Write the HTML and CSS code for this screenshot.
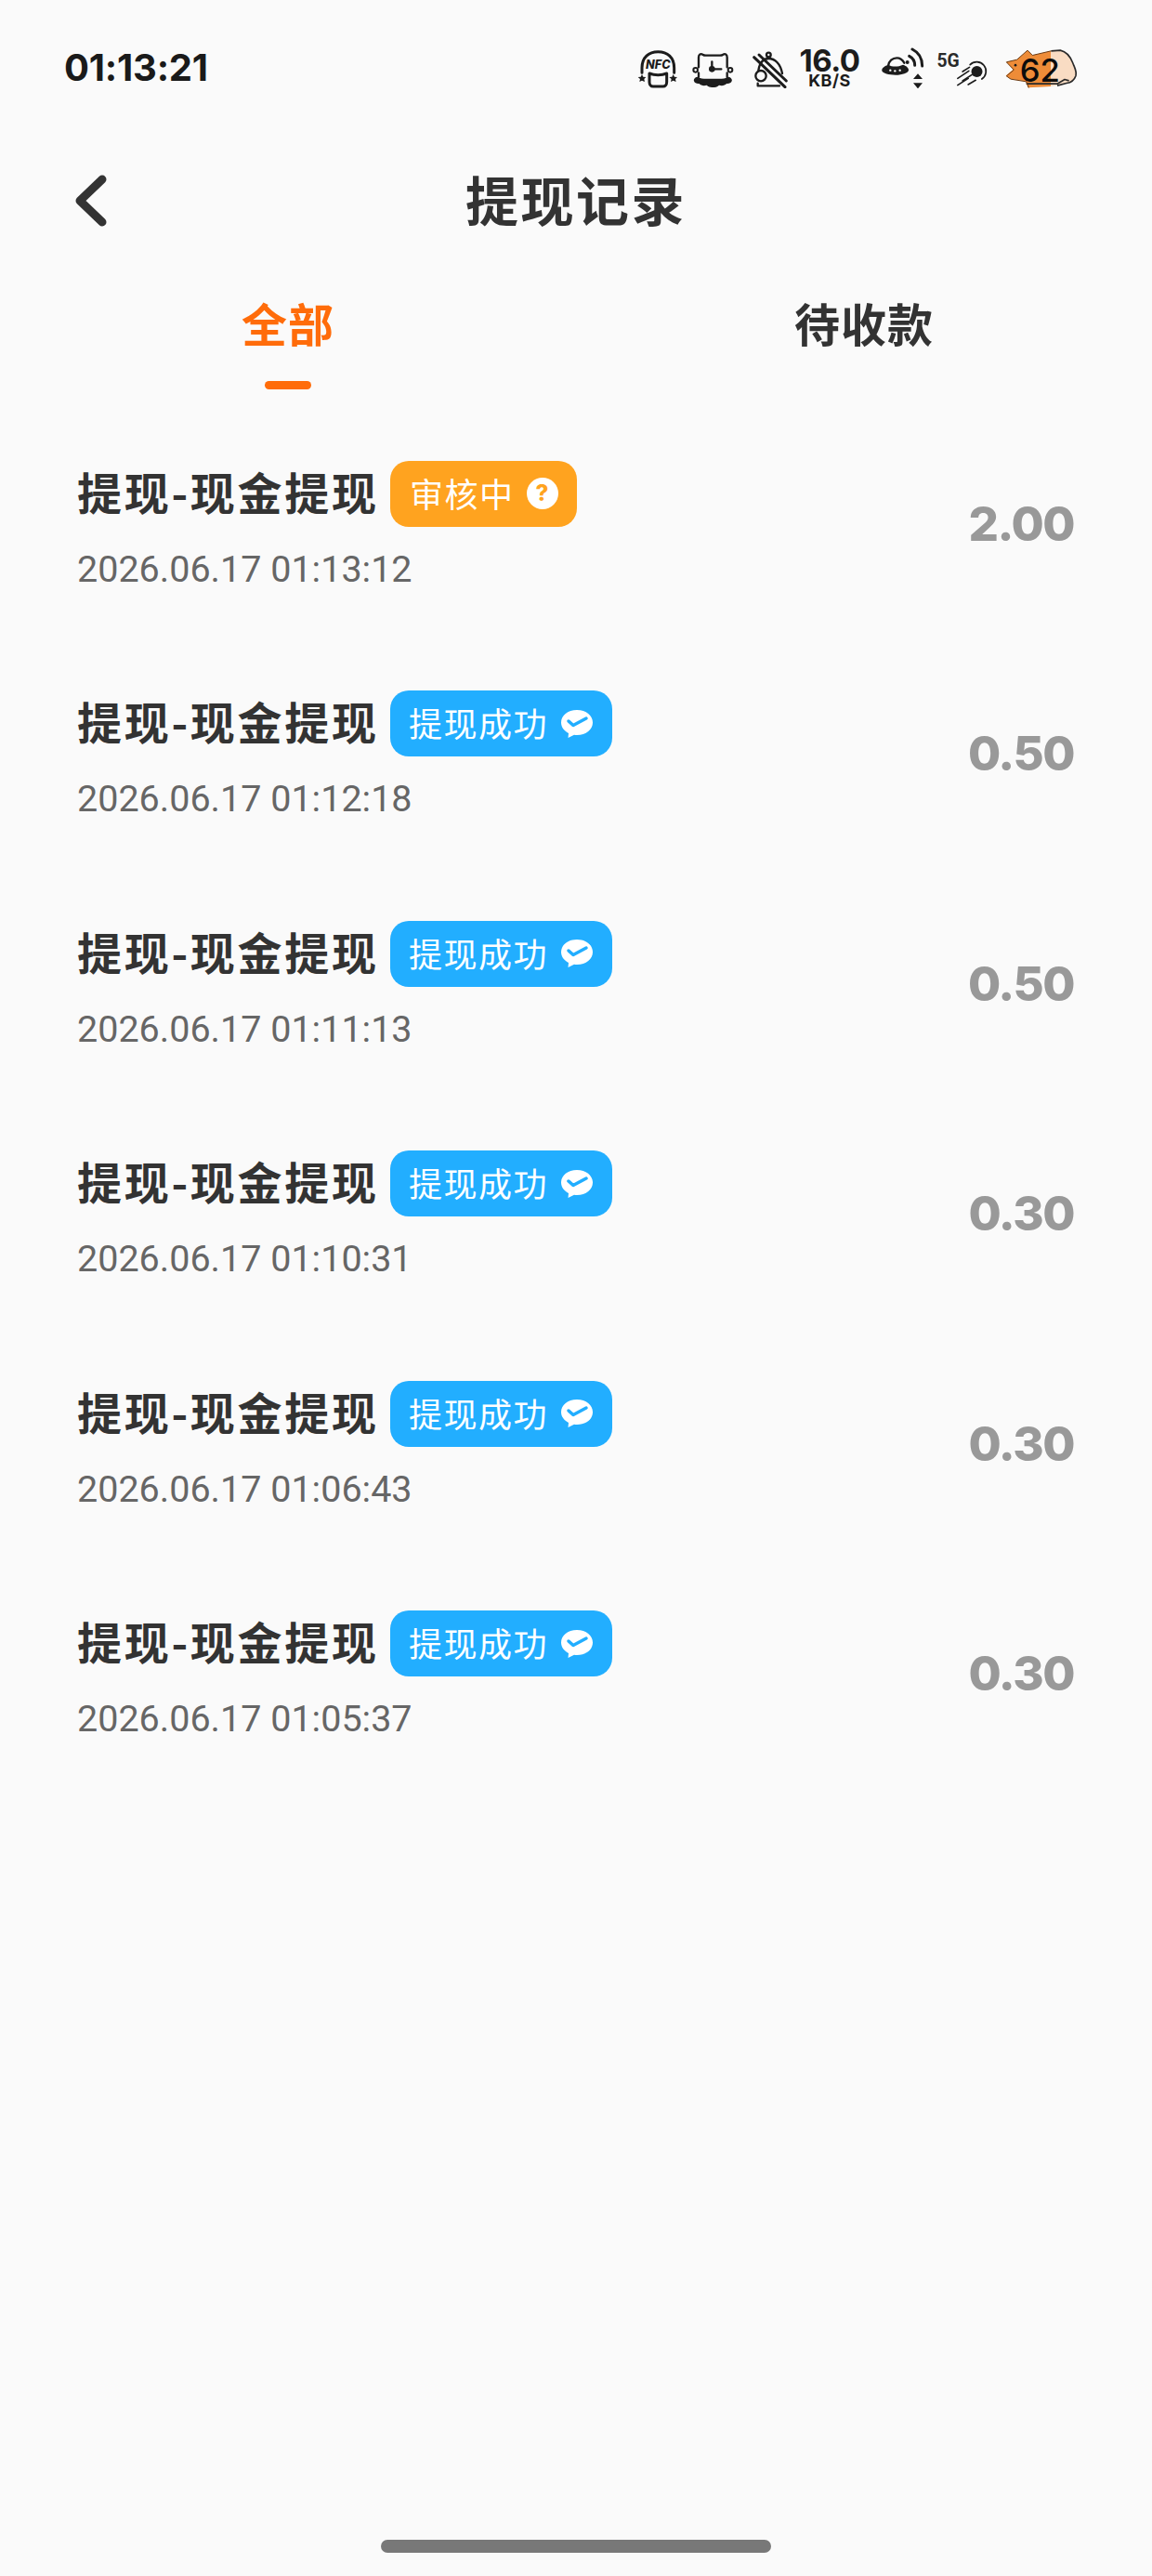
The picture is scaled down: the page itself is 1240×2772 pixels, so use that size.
FILE: index.html
```html
<!DOCTYPE html>
<html lang="zh-CN">
<head>
<meta charset="utf-8">
<title>提现记录</title>
<link rel="stylesheet" href="styles.css">
</head>
<body>
<div class="page">
  <header class="status">
    <span class="time">01:13:21</span>
    <div class="status-icons">
      <svg class="si si-nfc" viewBox="18 30 144 132">
        <path class="ln" d="M36 112V96C36 62 58 44 88 44s52 18 52 52v16"/>
        <text class="nfc" x="88" y="100" text-anchor="middle">NFC</text>
        <path class="ln" d="M60 114c10 4 18 5 28 5s18-1 28-5v28c0 8-5 14-12 14H72c-7 0-12-6-12-14z"/>
        <path class="fl" d="M36 117l4 8 9 1-6 6 2 9-9-4-8 4 2-9-7-6 9-1zM137 117l4 8 9 1-6 6 2 9-9-4-8 4 2-9-7-6 9-1z"/>
      </svg>
      <svg class="si si-clock" viewBox="198 30 144 132">
        <path class="ln-mid" d="M219 94V62c0-9 7-13 13-9 3 2 6 3 10 3h46c4 0 7-1 10-3 6-4 13 0 13 9v32"/>
        <path class="ln-mid" d="M219 112v14M311 112v14"/>
        <circle class="ring" cx="209" cy="103" r="7"/>
        <circle class="ring" cx="321" cy="103" r="7"/>
        <path class="fl" d="M214 125c10 5 20 6 30 6h42c10 0 20-1 30-6 8 2 12 8 10 14-2 7-10 9-17 8-5 6-15 8-24 5-6 6-14 7-20 7s-14-1-20-7c-9 3-19 1-24-5-7 1-15-1-17-8-2-6 2-12 10-14z"/>
        <path class="ln-mid" d="M262 76v24h30"/>
        <circle class="fl" cx="262" cy="100" r="10"/>
      </svg>
      <svg class="si si-bell" viewBox="384 30 132 132">
        <circle class="ln-mid" cx="445" cy="54" r="7"/>
        <path class="ln-mid" d="M412 104c4-24 16-38 33-38 20 0 38 16 44 48"/>
        <circle class="ln-mid" cx="420" cy="122" r="17"/>
        <path class="ln-mid" d="M410 146v8h70"/>
        <path class="st" d="M398 62l100 96"/>
        <path class="st" d="M414 54l88 84"/>
      </svg>
      <div class="speed"><span class="speed-num">16.0</span><span class="speed-unit">KB/S</span></div>
      <svg class="si si-ufo" viewBox="295 30 150 132">
        <path class="ln-mid" d="M322 90c2-16 14-26 28-26 10 0 18 5 24 16"/>
        <path class="fl" d="M322 86c-14 5-22 12-20 20 3 8 22 13 44 13s40-7 42-15c1-7-6-14-18-18-16 7-34 8-48 0z"/>
        <circle class="hole" cx="329" cy="104" r="3.500"/><circle class="hole" cx="344" cy="106" r="3.500"/><circle class="hole" cx="360" cy="104" r="3.500"/>
        <circle class="fl" cx="384" cy="78" r="6"/>
        <path class="ln" d="M390 58c12 6 18 16 18 30"/>
        <path class="ln" d="M400 36c20 10 32 30 32 54"/>
        <path class="fl" d="M418 115l15 17h-30zM403 145h30l-15 18z"/>
      </svg>
      <svg class="si si-net" viewBox="25 30 170 132">
        <text class="five-g" x="29" y="92">5G</text>
        <circle class="fl" cx="158" cy="108" r="18"/>
        <path class="ln-thin" d="M136 86a30 30 0 1 1 38 46"/>
        <path class="ln-thin" d="M112 108l22-14M96 130l36-24M112 138l30-20M96 152l34-22M130 150l24-14"/>
      </svg>
      <svg class="si si-bat" viewBox="245 30 240 140">
        <defs><clipPath id="bat-level"><rect x="245" y="30" width="150" height="140"/></clipPath></defs>
        <path class="bat-empty" d="M252 80l34-8 34-30 16 16 60-14 30-2c18 4 32 20 40 40 6 16 14 28 10 42-4 12-14 22-30 24l-44 10-80 4-8-20-50-8-14-10 24-20z"/>
        <path class="bat-full" clip-path="url(#bat-level)" d="M252 80l34-8 34-30 16 16 60-14 30-2c18 4 32 20 40 40 6 16 14 28 10 42-4 12-14 22-30 24l-44 10-80 4-8-20-50-8-14-10 24-20z"/>
        <path class="bat-line" d="M396 44l30-2c18 4 32 20 40 40 6 16 14 28 10 42-4 12-14 22-30 24l-30 8M316 150h100l24-14 14 4"/>
        <path class="bat-edge" d="M252 80l34-8 34-30 16 16 60-14M252 125l24-20-24-25M252 125l14 10 50 8 8 20"/>
        <circle class="fl" cx="281" cy="90" r="4"/>
        <text class="bat-num" x="360" y="145" text-anchor="middle">62</text>
      </svg>
    </div>
  </header>

  <nav class="nav">
    <svg class="back" viewBox="0 0 40 60"><path d="M32 6L8 29l24 23"/></svg>
    <h1 class="nav-title">提现记录</h1>
  </nav>

  <div class="tabs">
    <div class="tab tab-active"><span class="tab-label">全部</span><i class="tab-bar"></i></div>
    <div class="tab"><span class="tab-label">待收款</span></div>
  </div>

  <main class="list">
    <div class="row">
      <div class="row-main">
        <div class="row-head"><span class="row-title">提现-现金提现</span>
          <span class="badge badge-wait">审核中<i class="q">?</i></span></div>
        <div class="row-date">2026.06.17 01:13:12</div>
      </div>
      <div class="amount">2.00</div>
    </div>
    <div class="row">
      <div class="row-main">
        <div class="row-head"><span class="row-title">提现-现金提现</span>
          <span class="badge badge-ok">提现成功<svg class="wx" viewBox="0 0 36 32"><path class="wx-b" d="M18 1C8 1 1 7 1 14.500c0 5 3.200 9 8 11.500l-.5 5 6.500-3.200c1 .2 2 .2 3 .2 10 0 17-6 17-13.500S28 1 18 1z"/><path class="wx-c" d="M9 13l5 4.500L28 10"/></svg></span></div>
        <div class="row-date">2026.06.17 01:12:18</div>
      </div>
      <div class="amount">0.50</div>
    </div>
    <div class="row">
      <div class="row-main">
        <div class="row-head"><span class="row-title">提现-现金提现</span>
          <span class="badge badge-ok">提现成功<svg class="wx" viewBox="0 0 36 32"><path class="wx-b" d="M18 1C8 1 1 7 1 14.500c0 5 3.200 9 8 11.500l-.5 5 6.500-3.200c1 .2 2 .2 3 .2 10 0 17-6 17-13.500S28 1 18 1z"/><path class="wx-c" d="M9 13l5 4.500L28 10"/></svg></span></div>
        <div class="row-date">2026.06.17 01:11:13</div>
      </div>
      <div class="amount">0.50</div>
    </div>
    <div class="row">
      <div class="row-main">
        <div class="row-head"><span class="row-title">提现-现金提现</span>
          <span class="badge badge-ok">提现成功<svg class="wx" viewBox="0 0 36 32"><path class="wx-b" d="M18 1C8 1 1 7 1 14.500c0 5 3.200 9 8 11.500l-.5 5 6.500-3.200c1 .2 2 .2 3 .2 10 0 17-6 17-13.500S28 1 18 1z"/><path class="wx-c" d="M9 13l5 4.500L28 10"/></svg></span></div>
        <div class="row-date">2026.06.17 01:10:31</div>
      </div>
      <div class="amount">0.30</div>
    </div>
    <div class="row">
      <div class="row-main">
        <div class="row-head"><span class="row-title">提现-现金提现</span>
          <span class="badge badge-ok">提现成功<svg class="wx" viewBox="0 0 36 32"><path class="wx-b" d="M18 1C8 1 1 7 1 14.500c0 5 3.200 9 8 11.500l-.5 5 6.500-3.200c1 .2 2 .2 3 .2 10 0 17-6 17-13.500S28 1 18 1z"/><path class="wx-c" d="M9 13l5 4.500L28 10"/></svg></span></div>
        <div class="row-date">2026.06.17 01:06:43</div>
      </div>
      <div class="amount">0.30</div>
    </div>
    <div class="row">
      <div class="row-main">
        <div class="row-head"><span class="row-title">提现-现金提现</span>
          <span class="badge badge-ok">提现成功<svg class="wx" viewBox="0 0 36 32"><path class="wx-b" d="M18 1C8 1 1 7 1 14.500c0 5 3.200 9 8 11.500l-.5 5 6.500-3.200c1 .2 2 .2 3 .2 10 0 17-6 17-13.500S28 1 18 1z"/><path class="wx-c" d="M9 13l5 4.500L28 10"/></svg></span></div>
        <div class="row-date">2026.06.17 01:05:37</div>
      </div>
      <div class="amount">0.30</div>
    </div>
  </main>

  <footer class="home"><i class="home-bar"></i></footer>
</div>
</body>
</html>
```
FILE: styles.css
```css
* { box-sizing: border-box; }
html, body { margin: 0; padding: 0; }
body {
  background: #fafafa;
  font-family: "Noto Sans CJK SC", "Noto Sans", sans-serif;
  color: #333;
}
.page {
  width: 1240px;
  height: 2772px;
  display: flex;
  flex-direction: column;
}

/* status bar */
.status {
  height: 146px;
  flex: none;
  display: flex;
  align-items: center;
  justify-content: space-between;
  padding: 0 79px 0 69px;
}
.time {
  font-family: Inter, sans-serif;
  font-weight: 700;
  font-size: 40px;
  line-height: 48px;
  letter-spacing: -0.2px;
  color: #1a1a1a;
}
.status-icons { display: flex; align-items: center; height: 47px; }
.si { display: block; height: 44px; flex: none; }
.si-nfc { width: 48px; }
.si-clock { width: 48px; margin-left: 12px; }
.si-bell { width: 44px; margin-left: 14px; }
.si-ufo { width: 50px; margin-left: 22px; }
.si-net { width: 57px; margin-left: 10px; }
.si-bat { width: 80px; height: 47px; margin-left: 17px; }
.ln { fill: none; stroke: #1c1c1c; stroke-width: 9; stroke-linecap: round; stroke-linejoin: round; }
.ln-mid { fill: none; stroke: #1c1c1c; stroke-width: 7; stroke-linecap: round; stroke-linejoin: round; }
.ln-thin { fill: none; stroke: #1c1c1c; stroke-width: 5; stroke-linecap: round; }
.st { fill: none; stroke: #1c1c1c; stroke-width: 9; stroke-linecap: round; }
.fl { fill: #1c1c1c; }
.hole { fill: #fafafa; }
.ring { fill: #fafafa; stroke: #1c1c1c; stroke-width: 6; }
.nfc { font-family: Inter, sans-serif; font-weight: 800; font-style: italic; font-size: 38px; fill: #1c1c1c; }
.five-g { font-family: Roboto, sans-serif; font-weight: 700; font-size: 58px; fill: #2a2a2a; }
.speed {
  width: 64px;
  margin-left: 10px;
  display: flex;
  flex-direction: column;
  align-items: center;
  font-family: Inter, sans-serif;
  color: #1c1c1c;
}
.speed-num { font-size: 33px; line-height: 27px; font-weight: 700; letter-spacing: -0.5px; }
.speed-unit { font-size: 18px; line-height: 16px; font-weight: 700; letter-spacing: 0.5px; }
.bat-empty { fill: #f9dcc3; }
.bat-full { fill: #ee8c38; }
.bat-line { fill: none; stroke: #2a2a2a; stroke-width: 5; stroke-linejoin: round; }
.bat-edge { fill: none; stroke: #6b3a12; stroke-width: 3; stroke-linejoin: round; }
.bat-num { font-family: Inter, sans-serif; font-weight: 500; font-size: 104px; fill: #0c0c0c; }

/* nav */
.nav {
  height: 140px;
  flex: none;
  position: relative;
  display: flex;
  align-items: center;
  justify-content: center;
}
.back {
  position: absolute;
  left: 78px;
  top: 41px;
  width: 40px;
  height: 60px;
  fill: none;
  stroke: #333;
  stroke-width: 9;
  stroke-linecap: round;
  stroke-linejoin: round;
}
.nav-title {
  margin: 0 0 6px;
  font-size: 57px;
  line-height: 70px;
  font-weight: 700;
  letter-spacing: 2.500px;
  color: #333;
}

/* tabs */
.tabs {
  flex: none;
  height: 133px;
  padding-top: 29px;
  display: grid;
  grid-template-columns: 1fr 1fr;
}
.tab { display: flex; flex-direction: column; align-items: center; }
.tab-label {
  font-size: 49px;
  line-height: 64px;
  font-weight: 700;
  letter-spacing: 1px;
  color: #333;
}
.tab-active .tab-label { color: #ff6c0a; }
.tab-bar {
  display: block;
  width: 50px;
  height: 9px;
  margin-top: 31px;
  border-radius: 5px;
  background: #ff6c0a;
}

/* list */
.list { flex: none; padding-top: 21px; }
.row {
  height: 247.500px;
  padding: 0 84px 0 83px;
  display: flex;
  align-items: center;
  justify-content: space-between;
}
.row-main { display: flex; flex-direction: column; padding-top: 4px; }
.row-head { display: flex; align-items: center; height: 71px; }
.row-title {
  width: 337px;
  padding-bottom: 7px;
  font-size: 48px;
  line-height: 60px;
  font-weight: 700;
  letter-spacing: 2.700px;
  color: #333;
}
.badge {
  height: 71px;
  display: flex;
  align-items: center;
  padding-bottom: 3px;
  border-radius: 20px;
  font-size: 36px;
  color: #fff;
  letter-spacing: 1.500px;
}
.badge-wait { width: 201px; padding-left: 21px; background: #ffa31f; }
.badge-ok { width: 239px; padding-left: 20px; background: #22aeff; }
.q {
  width: 34px;
  height: 34px;
  margin: 3px 0 0 13px;
  border-radius: 50%;
  background: #fff;
  color: #ffa31f;
  font: 800 24px/34px Inter, sans-serif;
  text-align: center;
  letter-spacing: 0;
}
.wx { width: 36px; height: 32px; margin: 3px 0 0 13px; flex: none; }
.wx-b { fill: #fff; }
.wx-c { fill: none; stroke: #22aeff; stroke-width: 3.500; stroke-linecap: round; stroke-linejoin: round; }
.row-date {
  margin-top: 23px;
  font-family: Roboto, sans-serif;
  font-size: 39.500px;
  line-height: 46px;
  color: #666;
}
.amount {
  font-family: Inter, sans-serif;
  font-weight: 800;
  font-size: 51px;
  line-height: 60px;
  letter-spacing: -1.500px;
  color: #999;
}

/* home indicator */
.home {
  margin-top: auto;
  height: 39px;
  flex: none;
  display: flex;
  justify-content: center;
}
.home-bar {
  display: block;
  width: 420px;
  height: 14px;
  border-radius: 7px;
  background: #787878;
}
```
